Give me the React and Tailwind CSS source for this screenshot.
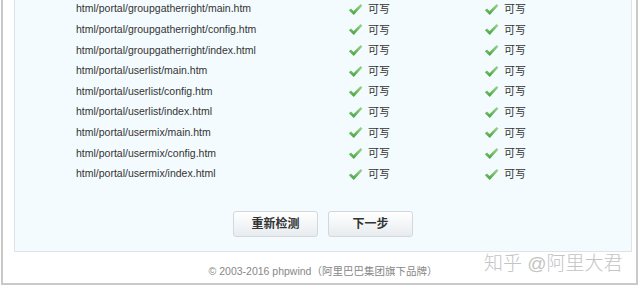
const files = [
  'html/portal/groupgatherright/main.htm',
  'html/portal/groupgatherright/config.htm',
  'html/portal/groupgatherright/index.html',
  'html/portal/userlist/main.htm',
  'html/portal/userlist/config.htm',
  'html/portal/userlist/index.html',
  'html/portal/usermix/main.htm',
  'html/portal/usermix/config.htm',
  'html/portal/usermix/index.html',
]

function Check() {
  return (
    <svg width="15" height="13" viewBox="0 0 15 13" className="shrink-0">
      <defs>
        <linearGradient id="ck" x1="0" y1="0" x2="0" y2="1">
          <stop offset="0" stopColor="#9ad88a" />
          <stop offset="1" stopColor="#45a040" />
        </linearGradient>
      </defs>
      <path d="M0.8 7.2 L3 5.4 L5.6 8 L12.6 1 L14.4 2.6 L5.8 12 Z" fill="url(#ck)" />
    </svg>
  )
}

function Status() {
  return (
    <div className="flex items-center gap-[5px]">
      <Check />
      <span className="text-[11px]">可写</span>
    </div>
  )
}

export default function App() {
  return (
    <div
      className="w-[640px] h-[288px] bg-white overflow-hidden relative text-[#333]"
      style={{ fontFamily: '"Liberation Sans", Arial, "Noto Sans CJK SC", sans-serif' }}
    >
      <div className="ml-[1px] w-[637px] h-[285px] border-x-2 border-b-2 border-[#c9c9c9] pl-[11px] pr-[4px]">
        <div className="bg-[#f4fbfe] border-x border-b border-[#dfe3e5] h-[252px] flex flex-col">
          <div className="-mt-[1px] pl-[61px] text-[10.5px]">
            {files.map((f) => (
              <div key={f} className="grid grid-cols-[272px_136px_100px] items-center h-[20.6px]">
                <span>{f}</span>
                <Status />
                <Status />
              </div>
            ))}
          </div>
          <div className="flex justify-center gap-[10px] mt-[27px]">
            <button className="w-[85px] h-[26px] rounded-[3px] border border-[#d3d8dc] bg-gradient-to-b from-white to-[#e8ecef] text-[12px] font-bold text-[#333]">
              重新检测
            </button>
            <button className="w-[85px] h-[26px] rounded-[3px] border border-[#d3d8dc] bg-gradient-to-b from-white to-[#e8ecef] text-[12px] font-bold text-[#333]">
              下一步
            </button>
          </div>
        </div>
        <div className="text-center text-[10.5px] text-[#888] mt-[12px]">
          © 2003-2016 phpwind（阿里巴巴集团旗下品牌）
        </div>
      </div>
      <div className="absolute left-[484px] top-[254px] text-[19px] text-[#c4c4c4] leading-none font-light">
        知乎 @阿里大君
      </div>
    </div>
  )
}
